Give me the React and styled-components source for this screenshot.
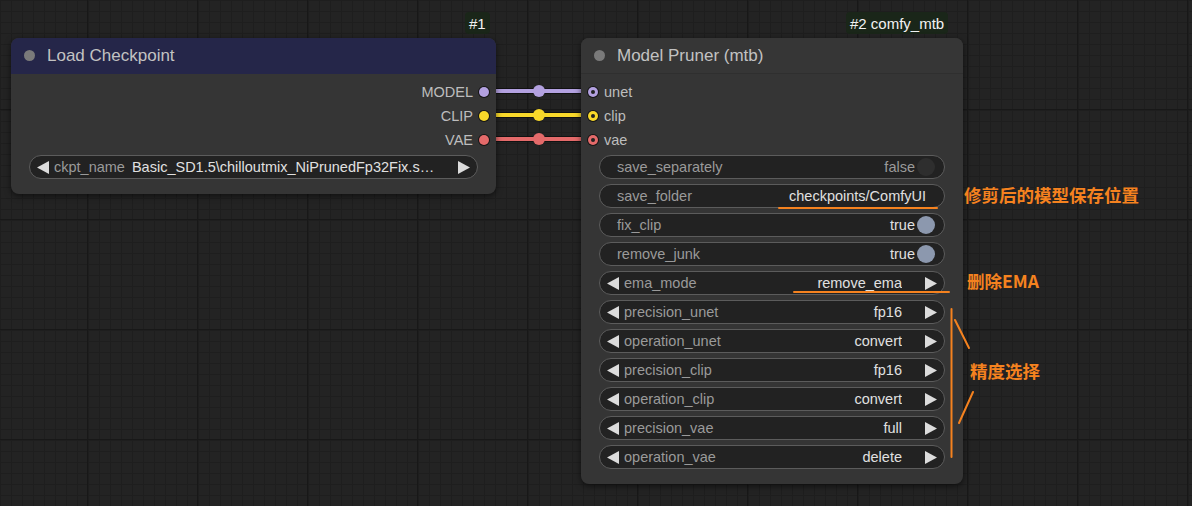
import React from "react";
import styled, { createGlobalStyle } from "styled-components";

const GlobalStyle = createGlobalStyle`
  html, body {
    margin: 0;
    padding: 0;
    background: #222;
  }
  * {
    box-sizing: border-box;
  }
`;

const Canvas = styled.div`
  position: relative;
  width: 1192px;
  height: 506px;
  overflow: hidden;
  font-family: "Liberation Sans", Arial, sans-serif;
  background-color: #232323;
  background-image:
    linear-gradient(to right, #181818 1px, transparent 1px),
    linear-gradient(to bottom, #181818 1px, transparent 1px),
    linear-gradient(to right, #1e1e1e 1px, transparent 1px),
    linear-gradient(to bottom, #1e1e1e 1px, transparent 1px);
  background-size: 110px 110px, 110px 110px, 11px 11px, 11px 11px;
  background-position: 87px 109px, 87px 109px, 0 0, 0 0;
`;

const Links = styled.svg`
  position: absolute;
  left: 0;
  top: 0;
  z-index: 0;
`;

const Badge = styled.div`
  position: absolute;
  left: ${(p) => p.$x}px;
  top: 12px;
  height: 22px;
  padding: 0 4px;
  display: flex;
  align-items: center;
  background: #1a2619;
  border-radius: 4px;
  color: #f2f2f2;
  font-size: 15px;
  white-space: nowrap;
`;

const Node = styled.div`
  position: absolute;
  left: ${(p) => p.$x}px;
  top: ${(p) => p.$y}px;
  width: ${(p) => p.$w}px;
  z-index: 1;
  background: #353535;
  border-radius: 8px;
  box-shadow: 0 2px 6px rgba(0, 0, 0, 0.55);
`;

const Title = styled.div`
  height: 36px;
  display: flex;
  align-items: center;
  gap: 12px;
  padding-left: 13px;
  background: ${(p) => p.$bg};
  border-radius: 8px 8px 0 0;
  border-bottom: 1px solid ${(p) => p.$line};
  color: #c2c2c2;
  font-size: 17px;
`;

const TitleDot = styled.span`
  width: 11px;
  height: 11px;
  border-radius: 50%;
  background: #7a7a7a;
`;

const Body = styled.div`
  display: flex;
  flex-direction: column;
  padding: 6px 0 15px;
`;

const Slots = styled.div`
  display: flex;
  flex-direction: column;
  margin-bottom: 3px;
`;

const Slot = styled.div`
  height: 24px;
  display: flex;
  align-items: center;
  justify-content: ${(p) => (p.$out ? "flex-end" : "flex-start")};
  gap: 6px;
  padding: ${(p) => (p.$out ? "0 7px 0 0" : "0 0 0 7px")};
  color: #bdbdbd;
  font-size: 14.5px;
`;

const SlotDot = styled.span`
  width: 10px;
  height: 10px;
  border-radius: 50%;
  background: ${(p) => p.$c};
  box-shadow: 0 0 0 1px #151515;
  display: flex;
  align-items: center;
  justify-content: center;
  &::after {
    content: "";
    display: ${(p) => (p.$ring ? "block" : "none")};
    width: 4px;
    height: 4px;
    border-radius: 50%;
    background: #222;
  }
`;

const Widgets = styled.div`
  display: flex;
  flex-direction: column;
  gap: 5px;
  padding: 0 18px;
`;

const Widget = styled.div`
  height: 24px;
  display: flex;
  align-items: center;
  background: #222;
  border: 1px solid #5c5c5c;
  border-radius: 12px;
  padding: ${(p) => (p.$combo ? "0 7px" : "0 9px 0 17px")};
  font-size: 14.5px;
  white-space: nowrap;
`;

const Label = styled.span`
  color: #9a9a9a;
  margin-left: ${(p) => p.$ml || 0}px;
`;

const Value = styled.span`
  flex: 1;
  text-align: ${(p) => (p.$left ? "left" : "right")};
  color: ${(p) => (p.$dim ? "#9a9a9a" : "#e0e0e0")};
  margin: ${(p) => p.$m || "0"};
  overflow: hidden;
  text-overflow: ellipsis;
`;

const Knob = styled.span`
  width: 18px;
  height: 18px;
  border-radius: 50%;
  margin-left: 2px;
  background: ${(p) => (p.$on ? "#8c98ae" : "#2e2e2e")};
`;

const Arrow = ({ right }) => (
  <svg width="12" height="13" viewBox="0 0 12 13" style={{ flex: "none" }}>
    {right ? (
      <polygon points="0,0 12,6.5 0,13" fill="#dcdcdc" />
    ) : (
      <polygon points="12,0 0,6.5 12,13" fill="#dcdcdc" />
    )}
  </svg>
);

const Note = styled.div`
  position: absolute;
  left: ${(p) => p.$x}px;
  top: ${(p) => p.$y}px;
  color: #f5821f;
  font-family: "Noto Sans CJK SC", "Liberation Sans", sans-serif;
  font-weight: 700;
  font-size: 17.5px;
  line-height: 20px;
  white-space: nowrap;
  z-index: 2;
`;

const Marks = styled.svg`
  position: absolute;
  left: 0;
  top: 0;
  z-index: 2;
  pointer-events: none;
`;

const links = [
  { y: 91, c: "#b3a1e0" },
  { y: 115, c: "#f8d82a" },
  { y: 139, c: "#e46a6a" },
];

const Combo = ({ label, value }) => (
  <Widget $combo>
    <Arrow />
    <Label $ml={5}>{label}</Label>
    <Value $m="0 23px 0 0">{value}</Value>
    <Arrow right />
  </Widget>
);

const Toggle = ({ label, on }) => (
  <Widget>
    <Label>{label}</Label>
    <Value $dim={!on}>{on ? "true" : "false"}</Value>
    <Knob $on={on} />
  </Widget>
);

export default function App() {
  return (
    <>
      <GlobalStyle />
      <Canvas>
        <Links width="1192" height="506">
          {links.map((l) => (
            <g key={l.y}>
              <line x1="489" y1={l.y} x2="588" y2={l.y} stroke="#111" strokeWidth="6" />
              <line x1="489" y1={l.y} x2="588" y2={l.y} stroke={l.c} strokeWidth="4" />
              <circle cx="539" cy={l.y} r="6" fill={l.c} />
            </g>
          ))}
        </Links>

        <Badge $x={465}>#1</Badge>
        <Badge $x={846}>#2 comfy_mtb</Badge>

        <Node $x={11} $y={38} $w={485}>
          <Title $bg="#252649" $line="#252649">
            <TitleDot />
            Load Checkpoint
          </Title>
          <Body>
            <Slots>
              <Slot $out>MODEL<SlotDot $c="#b3a1e0" /></Slot>
              <Slot $out>CLIP<SlotDot $c="#f8d82a" /></Slot>
              <Slot $out>VAE<SlotDot $c="#e46a6a" /></Slot>
            </Slots>
            <Widgets>
              <Widget $combo>
                <Arrow />
                <Label $ml={5}>ckpt_name</Label>
                <Value $left $m="0 10px 0 7px">
                  Basic_SD1.5\chilloutmix_NiPrunedFp32Fix.s…
                </Value>
                <Arrow right />
              </Widget>
            </Widgets>
          </Body>
        </Node>

        <Node $x={581} $y={38} $w={382}>
          <Title $bg="#363636" $line="#2f2f2f">
            <TitleDot />
            Model Pruner (mtb)
          </Title>
          <Body>
            <Slots>
              <Slot><SlotDot $c="#b3a1e0" $ring />unet</Slot>
              <Slot><SlotDot $c="#f8d82a" $ring />clip</Slot>
              <Slot><SlotDot $c="#e46a6a" $ring />vae</Slot>
            </Slots>
            <Widgets>
              <Toggle label="save_separately" on={false} />
              <Widget>
                <Label>save_folder</Label>
                <Value $m="0 9px 0 0">checkpoints/ComfyUI</Value>
              </Widget>
              <Toggle label="fix_clip" on />
              <Toggle label="remove_junk" on />
              <Combo label="ema_mode" value="remove_ema" />
              <Combo label="precision_unet" value="fp16" />
              <Combo label="operation_unet" value="convert" />
              <Combo label="precision_clip" value="fp16" />
              <Combo label="operation_clip" value="convert" />
              <Combo label="precision_vae" value="full" />
              <Combo label="operation_vae" value="delete" />
            </Widgets>
          </Body>
        </Node>

        <Marks width="1192" height="506">
          <g stroke="#f5821f" strokeWidth="2" strokeLinecap="round">
            <line x1="779" y1="208" x2="937" y2="208" />
            <line x1="794" y1="292" x2="949" y2="292" />
            <line x1="951.5" y1="309" x2="951.5" y2="457" />
            <line x1="955" y1="320" x2="969" y2="348" />
            <line x1="973" y1="392" x2="959" y2="423" />
          </g>
        </Marks>

        <Note $x={964} $y={185}>修剪后的模型保存位置</Note>
        <Note $x={967} $y={271}>删除EMA</Note>
        <Note $x={970} $y={361}>精度选择</Note>
      </Canvas>
    </>
  );
}
